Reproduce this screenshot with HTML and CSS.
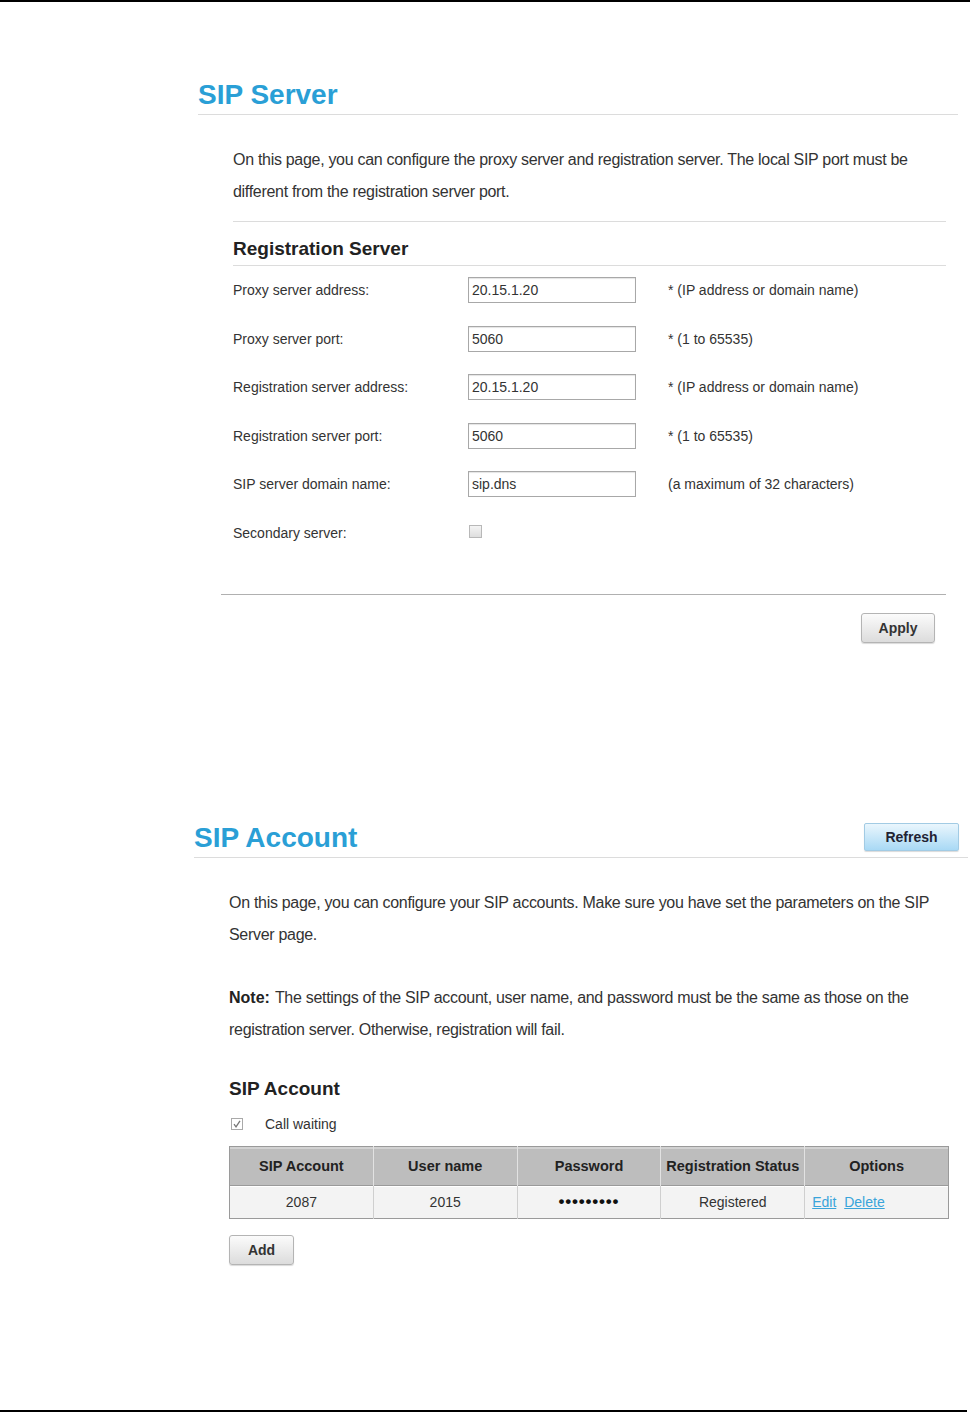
FILE: index.html
```html
<!DOCTYPE html>
<html lang="en">
<head>
<meta charset="utf-8">
<title>SIP Server / SIP Account</title>
<link rel="stylesheet" href="styles.css">
</head>
<body>
<div class="page">
  <section class="server">
    <h1 class="title">SIP Server</h1>
    <div class="inner">
      <p class="intro">On this page, you can configure the proxy server and registration server. The local SIP port must be different from the registration server port.</p>
      <h2 class="sub">Registration Server</h2>
      <div class="form">
        <div class="row"><span class="lbl">Proxy server address:</span><span class="field">20.15.1.20</span><span class="hint">* (IP address or domain name)</span></div>
        <div class="row"><span class="lbl">Proxy server port:</span><span class="field">5060</span><span class="hint">* (1 to 65535)</span></div>
        <div class="row"><span class="lbl">Registration server address:</span><span class="field">20.15.1.20</span><span class="hint">* (IP address or domain name)</span></div>
        <div class="row"><span class="lbl">Registration server port:</span><span class="field">5060</span><span class="hint">* (1 to 65535)</span></div>
        <div class="row"><span class="lbl">SIP server domain name:</span><span class="field">sip.dns</span><span class="hint">(a maximum of 32 characters)</span></div>
        <div class="row"><span class="lbl">Secondary server:</span><span class="cbwrap"><span class="cb cb-off"></span></span><span class="hint"></span></div>
      </div>
    </div>
    <div class="sep"></div>
    <div class="actions"><button class="btn btn-apply">Apply</button></div>
  </section>

  <section class="account">
    <div class="title-row">
      <h1 class="title title-acc">SIP Account</h1>
      <button class="btn btn-refresh">Refresh</button>
    </div>
    <div class="inner2">
      <p class="intro">On this page, you can configure your SIP accounts. Make sure you have set the parameters on the SIP Server page.</p>
      <p class="intro note"><b class="note-k">Note:</b><span class="note-t">The settings of the SIP account, user name, and password must be the same as those on the</span><br><span class="note-t">registration server. Otherwise, registration will fail.</span></p>
      <h2 class="sub sub2">SIP Account</h2>
      <div class="cw"><span class="cb cb-on"><svg viewBox="0 0 12 12" width="12" height="12"><path d="M3 6.2 L5 8.8 L9 2.8" fill="none" stroke="#777" stroke-width="1.3"/></svg></span><span class="cwl">Call waiting</span></div>
      <table class="tbl">
        <thead>
          <tr><th>SIP Account</th><th>User name</th><th>Password</th><th>Registration Status</th><th>Options</th></tr>
        </thead>
        <tbody>
          <tr><td>2087</td><td>2015</td><td class="pw">•••••••••</td><td>Registered</td><td class="opt"><a href="#">Edit</a> <a href="#">Delete</a></td></tr>
        </tbody>
      </table>
      <button class="btn btn-add">Add</button>
    </div>
  </section>

  <div class="foot"></div>
</div>
</body>
</html>
```

FILE: styles.css
```css
html, body {
  margin: 0;
  padding: 0;
  background: #fff;
}
body {
  font-family: "Liberation Sans", Arial, sans-serif;
  color: #333;
}
.page {
  height: 1413px;
  box-sizing: border-box;
  border-top: 2px solid #000;
  display: flex;
  flex-direction: column;
}
.server {
  margin-left: 198px;
  width: 760px;
}
.title {
  margin: 77px 0 0 0;
  font-size: 28px;
  line-height: 32px;
  font-weight: bold;
  color: #2a9fd6;
  padding-bottom: 3px;
  border-bottom: 1px solid #dcdcdc;
}
.inner {
  margin-left: 35px;
  width: 713px;
}
.intro {
  margin: 29px 0 0 0;
  font-size: 16px;
  line-height: 32px;
  letter-spacing: -0.3px;
  color: #333;
}
.server .intro {
  padding-bottom: 13px;
  border-bottom: 1px solid #dcdcdc;
}
.sub {
  margin: 15px 0 0 0;
  font-size: 19px;
  line-height: 24px;
  font-weight: bold;
  color: #222;
  padding-bottom: 4px;
  border-bottom: 1px solid #dcdcdc;
}
.form {
  display: flex;
  flex-direction: column;
}
.row {
  height: 48.5px;
  display: grid;
  grid-template-columns: 235px 168px 1fr;
  align-items: center;
  font-size: 14px;
}
.lbl {
  color: #333;
}
.field {
  box-sizing: border-box;
  height: 26px;
  border: 1px solid #a8a8a8;
  box-shadow: inset 0 1px 1px #e4e4e4;
  padding: 0 3px;
  line-height: 24px;
  font-size: 14px;
  color: #333;
  background: #fff;
}
.hint {
  margin-left: 32px;
  color: #333;
}
.cbwrap {
  display: flex;
  align-items: center;
  padding-left: 1px;
}
.cb {
  display: inline-block;
  box-sizing: border-box;
  width: 13px;
  height: 13px;
  border: 1px solid #b8b8b8;
  background: linear-gradient(#f4f4f4, #dedede);
}
.cb-off {
  margin-top: -3px;
}
.cb-on {
  width: 12px;
  height: 12px;
  background: #fff;
  border-color: #a9a9a9;
  position: relative;
}
.cb-on svg {
  position: absolute;
  left: -1px;
  top: -1px;
}
.sep {
  margin: 37px 0 0 23px;
  width: 725px;
  border-top: 1px solid #b0b0b0;
}
.actions {
  width: 748px;
  display: flex;
  justify-content: flex-end;
  padding-right: 11px;
  box-sizing: border-box;
  margin-top: 18px;
}
.btn {
  font-family: "Liberation Sans", Arial, sans-serif;
  font-weight: bold;
  font-size: 14px;
  color: #333;
  border: 1px solid #b4b4b4;
  border-radius: 3px;
  background: linear-gradient(#fbfbfb, #dcdcdc);
  box-shadow: 0 1px 1px rgba(0, 0, 0, 0.15);
  padding: 0;
  cursor: pointer;
}
.btn-apply {
  width: 74px;
  height: 30px;
}
.account {
  margin-top: 179px;
  margin-left: 194px;
  width: 774px;
}
.title-row {
  display: flex;
  align-items: flex-start;
  border-bottom: 1px solid #dcdcdc;
}
.title-acc {
  margin: 0;
  flex: 1;
  border-bottom: none;
}
.btn-refresh {
  margin: 1px 9px 0 0;
  width: 95px;
  height: 28px;
  border-radius: 2px;
  border-color: #a2cbe4;
  background: linear-gradient(#eaf6fd, #a9d9f5);
  color: #223;
}
.inner2 {
  margin-left: 35px;
  width: 720px;
}
.note {
  margin-top: 31px;
}
.note-k {
  color: #222;
  letter-spacing: 0;
  margin-right: 5px;
}
.sub2 {
  margin-top: 31px;
  border-bottom: none;
  padding-bottom: 0;
}
.cw {
  margin-top: 13px;
  height: 20px;
  display: flex;
  align-items: center;
  font-size: 14px;
  padding-left: 2px;
}
.cwl {
  margin-left: 22px;
}
.tbl {
  margin-top: 12px;
  width: 720px;
  border-collapse: collapse;
  border: 1px solid #9a9a9a;
  table-layout: fixed;
  font-size: 14px;
}
.tbl th {
  height: 38px;
  padding: 0;
  background: #bdbdbd;
  box-shadow: inset 0 2px 0 #d2d2d2;
  border-left: 1px solid #e2e2e2;
  color: #222;
  font-weight: bold;
  font-size: 14.5px;
}
.tbl th:first-child,
.tbl td:first-child {
  border-left: none;
}
.tbl td {
  height: 32px;
  padding: 0;
  background: #f3f3f3;
  border-left: 1px solid #cfcfcf;
  border-top: 1px solid #9a9a9a;
  text-align: center;
  color: #333;
  box-shadow: inset 0 1px 0 #fff;
}
.tbl td.pw {
  font-weight: bold;
  font-size: 17px;
  letter-spacing: 0.8px;
  color: #111;
}
.tbl td.opt {
  text-align: left;
  padding-left: 7px;
}
.tbl td.opt a {
  color: #3aa4da;
  text-decoration: underline;
  margin-right: 4px;
}
.btn-add {
  display: block;
  margin-top: 16px;
  width: 65px;
  height: 30px;
}
.foot {
  margin-top: auto;
  margin-bottom: 1px;
  width: 967px;
  border-top: 2px solid #000;
}
```
